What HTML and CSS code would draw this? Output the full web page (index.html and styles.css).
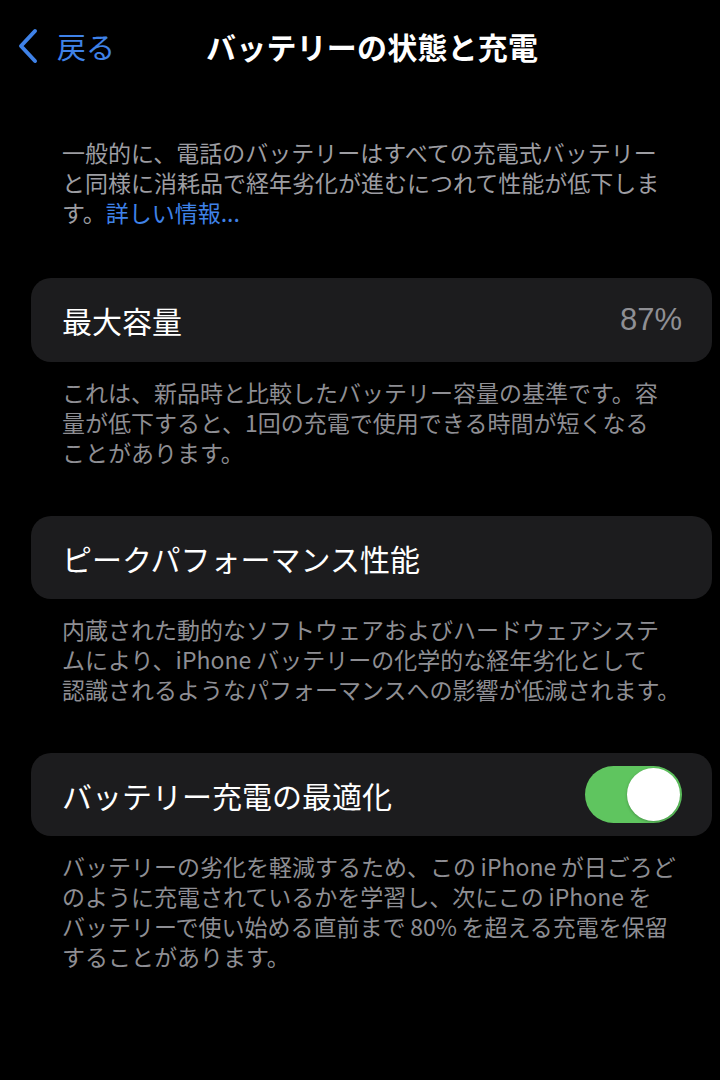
FILE: index.html
```html
<!DOCTYPE html>
<html lang="ja">
<head>
<meta charset="utf-8">
<link rel="stylesheet" href="styles.css">
</head>
<body>
<header class="nav">
  <a class="back">
    <svg class="chev" width="22" height="36" viewBox="0 0 22 36"><path d="M18 3 L4 18 L18 33" fill="none" stroke="currentColor" stroke-width="4" stroke-linecap="round" stroke-linejoin="round"/></svg>
    <span class="back-text">戻る</span>
  </a>
  <h1 class="title">バッテリーの状態と充電</h1>
</header>

<p class="intro">一般的に、電話のバッテリーはすべての充電式バッテリー<br>と同様に消耗品で経年劣化が進むにつれて性能が低下しま<br>す。<span class="link">詳しい情報...</span></p>

<div class="card card-first">
  <span class="label">最大容量</span>
  <span class="value">87%</span>
</div>
<p class="foot">これは、新品時と比較したバッテリー容量の基準です。容<br>量が低下すると、1回の充電で使用できる時間が短くなる<br>ことがあります。</p>

<div class="card">
  <span class="label">ピークパフォーマンス性能</span>
</div>
<p class="foot">内蔵された動的なソフトウェアおよびハードウェアシステ<br>ムにより、iPhone バッテリーの化学的な経年劣化として<br>認識されるようなパフォーマンスへの影響が低減されます。</p>

<div class="card">
  <span class="label">バッテリー充電の最適化</span>
  <span class="toggle"><span class="knob"></span></span>
</div>
<p class="foot">バッテリーの劣化を軽減するため、この&thinsp;iPhone&thinsp;が日ごろど<br>のように充電されているかを学習し、次にこの&thinsp;iPhone&thinsp;を<br>バッテリーで使い始める直前まで&thinsp;80%&thinsp;を超える充電を保留<br>することがあります。</p>
</body>
</html>
```

FILE: styles.css
```css
html, body {
  margin: 0;
  padding: 0;
  background: #000;
}
body {
  width: 720px;
  height: 1080px;
  font-family: "Noto Sans CJK JP", "Noto Sans", sans-serif;
  color: #fff;
  overflow: hidden;
}
.nav {
  height: 92px;
  display: flex;
  align-items: center;
  padding-left: 17px;
}
.back {
  display: flex;
  align-items: center;
  color: #3f82e8;
  gap: 18px;
  width: 189px;
}
.chev {
  display: block;
}
.back-text {
  font-size: 29px;
  line-height: 36px;
}
.title {
  margin: 0;
  font-size: 30px;
  font-weight: 700;
  line-height: 36px;
  letter-spacing: 0.2px;
}
.intro {
  margin: 45px 0 0 62px;
  font-size: 23px;
  line-height: 30px;
  color: #9d9da2;
  white-space: nowrap;
}
.link {
  color: #3f82e8;
}
.card {
  margin: 50px 8px 0 31px;
  height: 83px;
  background: #1c1c1e;
  border-radius: 20px;
  display: flex;
  align-items: center;
  justify-content: space-between;
  padding: 0 30px 0 31px;
}
.intro + .card {
  margin-top: 51px;
}
.foot + .card {
  margin-top: 49px;
}
.card-first {
  height: 84px;
}
.label {
  font-size: 30px;
  line-height: 36px;
  color: #fff;
}
.value {
  font-size: 31px;
  line-height: 36px;
  color: #8f8f94;
  font-family: "Liberation Sans", "Noto Sans", sans-serif;
}
.foot {
  margin: 15px 0 0 62px;
  font-size: 23px;
  line-height: 30px;
  color: #8e8e93;
  white-space: nowrap;
}
.toggle {
  width: 97px;
  height: 57px;
  border-radius: 29px;
  background: #5fc55f;
  display: flex;
  align-items: center;
  justify-content: flex-end;
  padding: 0 2px;
  box-sizing: border-box;
}
.knob {
  width: 53px;
  height: 53px;
  border-radius: 50%;
  background: #fff;
  box-shadow: 0 1px 3px rgba(0,0,0,0.25);
}
```
